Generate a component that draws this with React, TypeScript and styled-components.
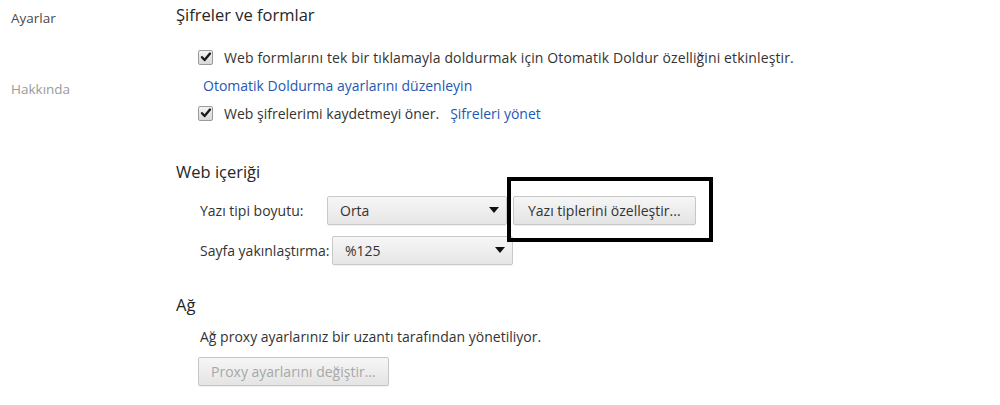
import React from "react";
import styled, { createGlobalStyle } from "styled-components";

const Global = createGlobalStyle`
  html, body { margin: 0; padding: 0; background: #fff; }
  body { font-family: "Open Sans", "Noto Sans", sans-serif; color: #333; }
`;

const Page = styled.div`
  display: flex;
  width: 1000px;
  height: 405px;
  overflow: hidden;
  background: #fff;
`;

const Nav = styled.nav`
  width: 165px;
  padding-left: 11px;
  display: flex;
  flex-direction: column;
`;

const NavItem = styled.div<{ $active?: boolean; $top: number }>`
  margin-top: ${(p) => p.$top}px;
  height: 22px;
  line-height: 22px;
  font-size: 13.5px;
  color: ${(p) => (p.$active ? "#4a4a4a" : "#9a9a9a")};
`;

const Main = styled.main`
  flex: 1;
  display: flex;
  flex-direction: column;
`;

const SectionTitle = styled.h3<{ $top: number }>`
  margin: ${(p) => p.$top}px 0 0 0;
  height: 30px;
  line-height: 30px;
  font-size: 16.5px;
  font-weight: 400;
  color: #262626;
`;

const Indent = styled.div<{ $top?: number }>`
  margin-top: ${(p) => p.$top ?? 0}px;
  padding-left: 22px;
  display: flex;
  flex-direction: column;
`;

const CheckRow = styled.label<{ $spacing?: number }>`
  display: flex;
  align-items: center;
  height: 28px;
  font-size: 14px;
  letter-spacing: ${(p) => p.$spacing ?? 0}px;
  color: #333;
`;

const Box = styled.span`
  width: 15px;
  height: 15px;
  box-sizing: border-box;
  border: 1px solid #9a9a9a;
  border-radius: 2px;
  background: linear-gradient(#f4f4f4, #d8d8d8);
  display: inline-flex;
  align-items: center;
  justify-content: center;
  margin-right: 11px;
  flex: none;
`;

const Link = styled.a<{ $gap?: number }>`
  color: #1e57b4;
  text-decoration: none;
  font-size: 14px;
  letter-spacing: 0;
  margin-left: ${(p) => p.$gap ?? 0}px;
  cursor: pointer;
`;

const LinkRow = styled.div`
  height: 28px;
  line-height: 28px;
  padding-left: 5px;
`;

const FieldRow = styled.div<{ $top: number }>`
  display: flex;
  align-items: center;
  height: 30px;
  margin-top: ${(p) => p.$top}px;
  padding-left: 2px;
`;

const FieldLabel = styled.span<{ $w: number }>`
  width: ${(p) => p.$w}px;
  font-size: 14px;
  color: #333;
  flex: none;
`;

const Select = styled.div<{ $w: number }>`
  width: ${(p) => p.$w}px;
  height: 29px;
  box-sizing: border-box;
  border: 1px solid #c9c9c9;
  border-radius: 2px;
  background: linear-gradient(#f6f6f6, #e6e6e6);
  box-shadow: 0 1px 0 rgba(0, 0, 0, 0.06);
  display: flex;
  align-items: center;
  justify-content: space-between;
  padding: 0 7px 0 12px;
  font-size: 14px;
  color: #333;
`;

const Arrow = styled.span`
  width: 0;
  height: 0;
  border-left: 5px solid transparent;
  border-right: 5px solid transparent;
  border-top: 6px solid #111;
`;

const ButtonWrap = styled.div`
  position: relative;
  margin-left: 6px;
  display: flex;
`;

const Button = styled.button<{ $disabled?: boolean; $pad?: number }>`
  height: 29px;
  box-sizing: border-box;
  border: 1px solid #c6c6c6;
  border-radius: 2px;
  background: linear-gradient(#f6f6f6, #e4e4e4);
  box-shadow: 0 1px 0 rgba(0, 0, 0, 0.06);
  font-family: inherit;
  font-size: 14px;
  color: ${(p) => (p.$disabled ? "#a8a8a8" : "#333")};
  padding: 0 ${(p) => p.$pad ?? 12}px;
  cursor: default;
`;

const Highlight = styled.div`
  position: absolute;
  left: -6px;
  top: -19px;
  right: -17px;
  bottom: -17px;
  border: 4px solid #000;
  pointer-events: none;
`;

const Note = styled.div`
  height: 22px;
  line-height: 22px;
  margin-top: 6px;
  padding-left: 2px;
  font-size: 14px;
  color: #333;
`;

const DisabledWrap = styled.div`
  margin-top: 9px;
  display: flex;
`;

const Check = () => (
  <svg width="12" height="12" viewBox="0 0 12 12">
    <path d="M2 6.2 L4.6 9 L10 2.6" fill="none" stroke="#1a1a1a" strokeWidth="2.4" strokeLinecap="round" strokeLinejoin="round" />
  </svg>
);

export default function App() {
  return (
    <>
      <Global />
      <Page>
        <Nav>
          <NavItem $active $top={7}>Ayarlar</NavItem>
          <NavItem $top={49}>Hakkında</NavItem>
        </Nav>
        <Main>
          <SectionTitle $top={0}>Şifreler ve formlar</SectionTitle>
          <Indent $top={13}>
            <CheckRow $spacing={0.12}>
              <Box><Check /></Box>
              Web formlarını tek bir tıklamayla doldurmak için Otomatik Doldur özelliğini etkinleştir.
            </CheckRow>
            <LinkRow>
              <Link>Otomatik Doldurma ayarlarını düzenleyin</Link>
            </LinkRow>
            <CheckRow>
              <Box><Check /></Box>
              Web şifrelerimi kaydetmeyi öner.
              <Link $gap={11}>Şifreleri yönet</Link>
            </CheckRow>
          </Indent>
          <SectionTitle $top={30}>Web içeriği</SectionTitle>
          <Indent>
            <FieldRow $top={8}>
              <FieldLabel $w={127}>Yazı tipi boyutu:</FieldLabel>
              <Select $w={180}>
                Orta
                <Arrow />
              </Select>
              <ButtonWrap>
                <Button $pad={14}>Yazı tiplerini özelleştir...</Button>
                <Highlight />
              </ButtonWrap>
            </FieldRow>
            <FieldRow $top={10}>
              <FieldLabel $w={132}>Sayfa yakınlaştırma:</FieldLabel>
              <Select $w={181}>
                %125
                <Arrow />
              </Select>
            </FieldRow>
          </Indent>
          <SectionTitle $top={25}>Ağ</SectionTitle>
          <Indent>
            <Note>Ağ proxy ayarlarınız bir uzantı tarafından yönetiliyor.</Note>
            <DisabledWrap>
              <Button $disabled disabled $pad={12}>Proxy ayarlarını değiştir...</Button>
            </DisabledWrap>
          </Indent>
        </Main>
      </Page>
    </>
  );
}
